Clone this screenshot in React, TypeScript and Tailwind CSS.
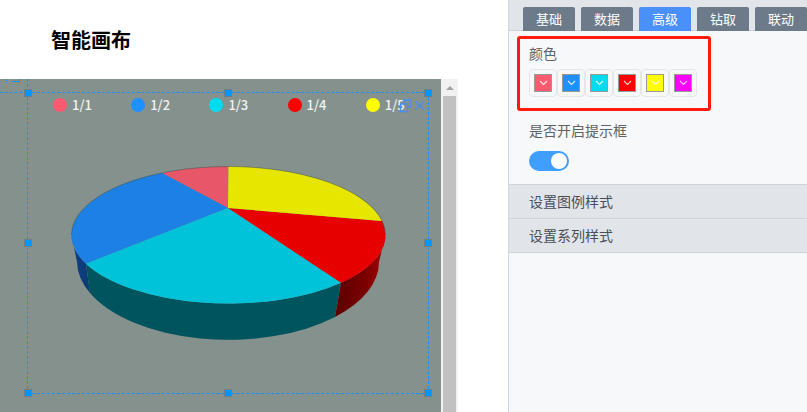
import React from "react";

const font = { fontFamily: '"Noto Sans CJK SC", "Noto Sans", sans-serif' };
const tabs = ["基础", "数据", "高级", "钻取", "联动"];
const swatches = ["bg-[#ff5a70]", "bg-[#1e90ff]", "bg-[#00dcef]", "bg-[#ff0000]", "bg-[#ffff00]", "bg-[#ff00ff]"];
const legend = [
  ["1/1", "bg-[#ff5a70]"],
  ["1/2", "bg-[#1e90ff]"],
  ["1/3", "bg-[#00dcef]"],
  ["1/4", "bg-[#ff0000]"],
  ["1/5", "bg-[#ffff00]"],
];
const handles = [
  "left-[-4px] top-[-4px]",
  "left-[196px] top-[-4px]",
  "left-[396px] top-[-4px]",
  "left-[-4px] top-[146px]",
  "left-[396px] top-[146px]",
  "left-[-4px] top-[296px]",
  "left-[196px] top-[296px]",
  "left-[396px] top-[296px]",
];

const T = "A157 68.5 0 0 0";
const BR = "A151 78 0 0 1";

function Pie() {
  return (
    <svg className="absolute left-0 top-0" width="441" height="333" viewBox="0 79 441 333">
      <defs>
        <linearGradient id="redSide" x1="335" x2="385" y1="0" y2="0" gradientUnits="userSpaceOnUse">
          <stop offset="0" stopColor="#5c0000" />
          <stop offset="0.6" stopColor="#7a0000" />
          <stop offset="1" stopColor="#a80000" />
        </linearGradient>
        <linearGradient id="blueSide" x1="72" x2="92" y1="0" y2="0" gradientUnits="userSpaceOnUse">
          <stop offset="0" stopColor="#0e3f86" />
          <stop offset="1" stopColor="#0c3a70" />
        </linearGradient>
      </defs>
      <path d={`M71.5 235 ${T} 86 263.7 L90 293 ${BR} 77 262 Z`} fill="url(#blueSide)" />
      <path d={`M86 263.7 ${T} 341 282.8 L335 317 ${BR} 90 293 Z`} fill="#00545e" />
      <path d={`M341 282.8 ${T} 385.5 235 L379 262 ${BR} 335 317 Z`} fill="url(#redSide)" />
      <path d={`M228 208 L228.5 166.5 ${T} 162 173 Z`} fill="#e8566a" />
      <path d={`M228 208 L162 173 ${T} 86 263.7 Z`} fill="#1c80e4" />
      <path d={`M228 208 L86 263.7 ${T} 341 282.8 Z`} fill="#00c3d9" />
      <path d={`M228 208 L341 282.8 ${T} 382 221 Z`} fill="#e60000" />
      <path d={`M228 208 L382 221 ${T} 228.5 166.5 Z`} fill="#e6e600" />
      <path d="M71.5 235 A157 68.5 0 0 1 228.5 166.5 A157 68.5 0 0 1 385.5 235" fill="none" stroke="#2b3a3a" strokeOpacity="0.55" strokeWidth="0.7" />
    </svg>
  );
}

function Canvas() {
  return (
    <div className="relative h-[333px] w-[441px] shrink-0 overflow-hidden bg-[#85918c]">
      <Pie />
      <div className="absolute left-[53px] top-[16px] flex">
        {legend.map(([label, color]) => (
          <div key={label} className="flex h-[20px] w-[78.2px] items-center gap-[5px]">
            <span className={`h-[14px] w-[14px] rounded-full ${color}`} />
            <span className="text-[13px] font-medium leading-[18px] text-[#f0f2f1]">{label}</span>
          </div>
        ))}
      </div>
      {/* selection frame */}
      <div className="absolute left-[0px] top-[13px] w-[27px] border-t border-dashed border-[#1890ff]" />
      <div className="absolute left-[27px] top-[0px] h-[13px] border-l border-dashed border-[#1890ff]" />
      <div className="absolute left-[6px] top-[0px] h-[3px] w-[1px] bg-[#1890ff]" />
      <div className="absolute left-[12px] top-[0px] h-[3px] w-[8px] border-b border-[#1890ff]" />
      <div className="absolute left-[19px] top-[0px] h-[4px] w-[1px] bg-[#1890ff]" />
      <div className="absolute left-[27px] top-[13px] h-[302px] w-[402px] border border-dashed border-[#1890ff]">
        {handles.map((h) => (
          <span key={h} className={`absolute h-[8px] w-[8px] border border-[#6f7f88] bg-[#0096ff] ${h}`} />
        ))}
      </div>
      <svg className="absolute left-[399px] top-[20px]" width="26" height="14" viewBox="0 0 26 14" fill="none" stroke="#4a8cf0" strokeWidth="1.3">
        <path d="M4.5 4 V1 H11.5 V8 H8.5" />
        <path d="M1.5 5 H8.5 V12.5 H1.5 Z" />
        <path d="M16 2 L25 11 M25 2 L16 11" />
      </svg>
    </div>
  );
}

function Scrollbar() {
  return (
    <div className="flex h-[333px] w-[17px] flex-col items-center bg-[#f1f1f1]">
      <div className="flex h-[17px] items-center">
        <span className="h-0 w-0 border-x-[4px] border-b-[4px] border-x-transparent border-b-[#a3a3a3]" />
      </div>
      <div className="h-[316px] w-[13px] bg-[#c1c1c1]" />
    </div>
  );
}

function Panel() {
  return (
    <div className="h-[412px] w-[299px] shrink-0 overflow-hidden border-l border-[#cfd6e0] bg-[#f7f8fa]">
      <div className="flex h-[31px] gap-[6px] border-b border-[#ccd3de] bg-[#e1e5ea] pl-[14px] pt-[7px]">
        {tabs.map((t) => (
          <div
            key={t}
            className={`flex h-[24px] w-[52px] shrink-0 items-center justify-center rounded-t-[2px] text-[13px] text-white ${
              t === "高级" ? "bg-[#4a90fb]" : "bg-[#6d7a8a]"
            }`}
          >
            {t}
          </div>
        ))}
      </div>
      <div className="ml-[8px] mt-[5px] h-[75px] w-[194px] rounded-[3px] border-[3px] border-[#ff1a0e] pl-[9px] pt-[2px]">
        <div className="text-[14px] leading-[24px] text-[#606266]">颜色</div>
        <div className="mt-[4px] flex">
          {swatches.map((c) => (
            <div key={c} className="flex h-[28px] w-[28px] items-center justify-center rounded-[4px] border border-[#e6e6e6]">
              <div className={`flex h-[18px] w-[18px] items-center justify-center border border-[#999999] ${c}`}>
                <svg width="9" height="6" viewBox="0 0 9 6" fill="none" stroke="#ffffff" strokeOpacity="0.85" strokeWidth="1.1">
                  <path d="M1 1 L4.5 4.5 L8 1" />
                </svg>
              </div>
            </div>
          ))}
        </div>
      </div>
      <div className="ml-[20px] mt-[9px] text-[14px] leading-[20px] text-[#606266]">是否开启提示框</div>
      <div className="ml-[20px] mt-[11px] flex h-[20px] w-[40px] items-center justify-end rounded-full bg-[#409eff] pr-[2px]">
        <span className="h-[16px] w-[16px] rounded-full bg-white" />
      </div>
      <div className="mt-[13px] flex h-[35px] items-center border-y border-[#cfd4da] bg-[#e1e5ea] pl-[20px] text-[14px] text-[#4a4f57]">
        设置图例样式
      </div>
      <div className="flex h-[34px] items-center border-b border-[#cfd4da] bg-[#e1e5ea] pl-[20px] text-[14px] text-[#4a4f57]">
        设置系列样式
      </div>
    </div>
  );
}

export default function App() {
  return (
    <div className="flex h-[412px] w-[807px] overflow-hidden bg-white" style={font}>
      <div className="w-[508px] shrink-0">
        <div className="flex h-[79px] items-start pl-[51px] pt-[25px] text-[20px] font-bold leading-[30px] text-black">智能画布</div>
        <div className="flex">
          <Canvas />
          <Scrollbar />
        </div>
      </div>
      <Panel />
    </div>
  );
}
